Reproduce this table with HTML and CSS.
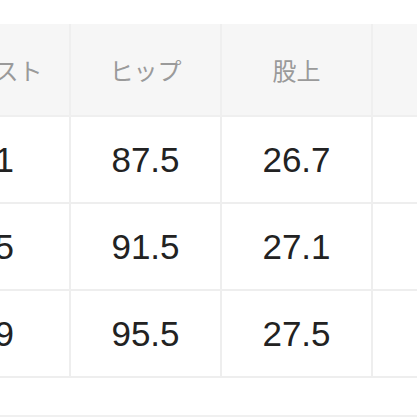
FILE: index.html
```html
<!DOCTYPE html>
<html lang="ja">
<head>
<meta charset="utf-8">
<link rel="stylesheet" href="styles.css">
</head>
<body>
<div class="wrap">
  <table class="size-table">
    <colgroup>
      <col class="c"><col class="c"><col class="c"><col class="c">
    </colgroup>
    <thead>
      <tr><th>ウエスト</th><th>ヒップ</th><th>股上</th><th></th></tr>
    </thead>
    <tbody>
      <tr><td>71</td><td>87.5</td><td>26.7</td><td></td></tr>
      <tr><td>75</td><td>91.5</td><td>27.1</td><td></td></tr>
      <tr><td>79</td><td>95.5</td><td>27.5</td><td></td></tr>
    </tbody>
  </table>
  <div class="below"></div>
</div>
</body>
</html>
```
FILE: styles.css
```css
html, body {
  margin: 0;
  padding: 0;
  background: #ffffff;
  overflow: hidden;
}
.wrap {
  width: 417px;
  height: 417px;
  overflow: hidden;
  padding-top: 24px;
  box-sizing: border-box;
}
.size-table {
  margin-left: -82px;
  width: 604px;
  table-layout: fixed;
  border-collapse: collapse;
}
.size-table .c {
  width: 151px;
}
.size-table th,
.size-table td {
  border: 2px solid #eeeeee;
  text-align: center;
  padding: 0;
}
.size-table thead tr th {
  border-top: none;
}
.size-table th {
  height: 91px;
  background: #f6f6f6;
  color: #9a9a9a;
  font-family: "Noto Sans CJK JP", "Noto Sans", sans-serif;
  font-size: 24px;
  font-weight: 400;
  border-color: #efefef;
}
.size-table td {
  height: 85px;
  background: #ffffff;
  color: #222222;
  font-family: "Liberation Sans", Arial, sans-serif;
  font-size: 35px;
}
.below {
  margin-top: 37px;
  border-top: 2px solid #f0f0f0;
}
```
